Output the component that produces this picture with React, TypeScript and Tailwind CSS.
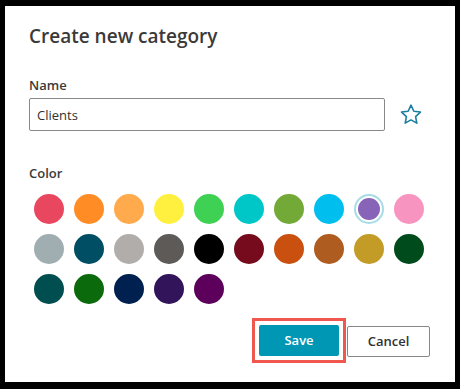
import { useState } from 'react'

const colors = [
  '#e8475f', '#ff8c24', '#ffaa4d', '#fff03f', '#3fd154', '#00c7c7', '#73aa37', '#00bfef', '#8764b8', '#f795c0',
  '#a0aeb2', '#004e63', '#b1adab', '#5d5a58', '#000000', '#750b1c', '#ca5010', '#ae5c1f', '#c29c26', '#004b1c',
  '#004e4f', '#0b6a0b', '#002050', '#32145a', '#5c005c',
]

function StarIcon() {
  return (
    <svg width="24" height="24" viewBox="0 0 24 24" fill="none">
      <path
        d="M12 2.2l2.85 6.05 6.6.8-4.87 4.55 1.25 6.55L12 16.9l-5.83 3.25 1.25-6.55L2.55 9.05l6.6-.8z"
        stroke="#1a7fa0"
        strokeWidth="1.6"
        strokeLinejoin="round"
      />
    </svg>
  )
}

export default function App() {
  const [selected, setSelected] = useState(8)
  const [name, setName] = useState('Clients')

  return (
    <div className="h-[389px] w-[460px] bg-black pl-[5px] pt-[6px]" style={{ fontFamily: '"Open Sans", "Noto Sans", sans-serif' }}>
      <div className="flex h-[376px] w-[450px] flex-col bg-white pl-6 pr-[25px] pt-[17px] text-[#3b3a39]">
        <h1 className="text-[19px] font-semibold leading-[26px]">Create new category</h1>

        {/* Name */}
        <label className="mt-[26px] text-[13px] font-semibold leading-[20px]">Name</label>
        <div className="mt-[3px] flex items-center">
          <input
            value={name}
            onChange={(e) => setName(e.target.value)}
            className="h-[33px] w-[356px] rounded-[2px] border border-[#8a8886] px-[7px] text-[13px] text-[#323130] outline-none"
          />
          <button className="ml-[10px] flex h-8 w-8 items-center justify-center">
            <StarIcon />
          </button>
        </div>

        {/* Color */}
        <label className="mt-[32px] text-[13px] font-semibold leading-[20px]">Color</label>
        <div className="mt-[6px] grid w-[400px] grid-cols-10">
          {colors.map((c, i) => (
            <button
              key={c}
              onClick={() => setSelected(i)}
              className="flex h-10 w-10 items-center justify-center"
            >
              {selected === i ? (
                <span className="flex h-[30px] w-[30px] items-center justify-center rounded-full border-2 border-[#a6dce6]">
                  <span className="h-[22px] w-[22px] rounded-full" style={{ backgroundColor: c }} />
                </span>
              ) : (
                <span className="h-[30px] w-[30px] rounded-full" style={{ backgroundColor: c }} />
              )}
            </button>
          ))}
        </div>

        {/* Footer */}
        <div className="mt-[9px] flex justify-end">
          <div className="border-[3px] border-[#f0584f] p-1">
            <button className="h-[31px] w-[80px] rounded-[2px] bg-[#0097b5] text-[13px] font-semibold text-white">Save</button>
          </div>
          <button className="mt-[8px] ml-px h-[31px] w-[83px] rounded-[2px] border border-[#8a8886] bg-white text-[13px] font-semibold text-[#323130]">
            Cancel
          </button>
        </div>
      </div>
    </div>
  )
}
